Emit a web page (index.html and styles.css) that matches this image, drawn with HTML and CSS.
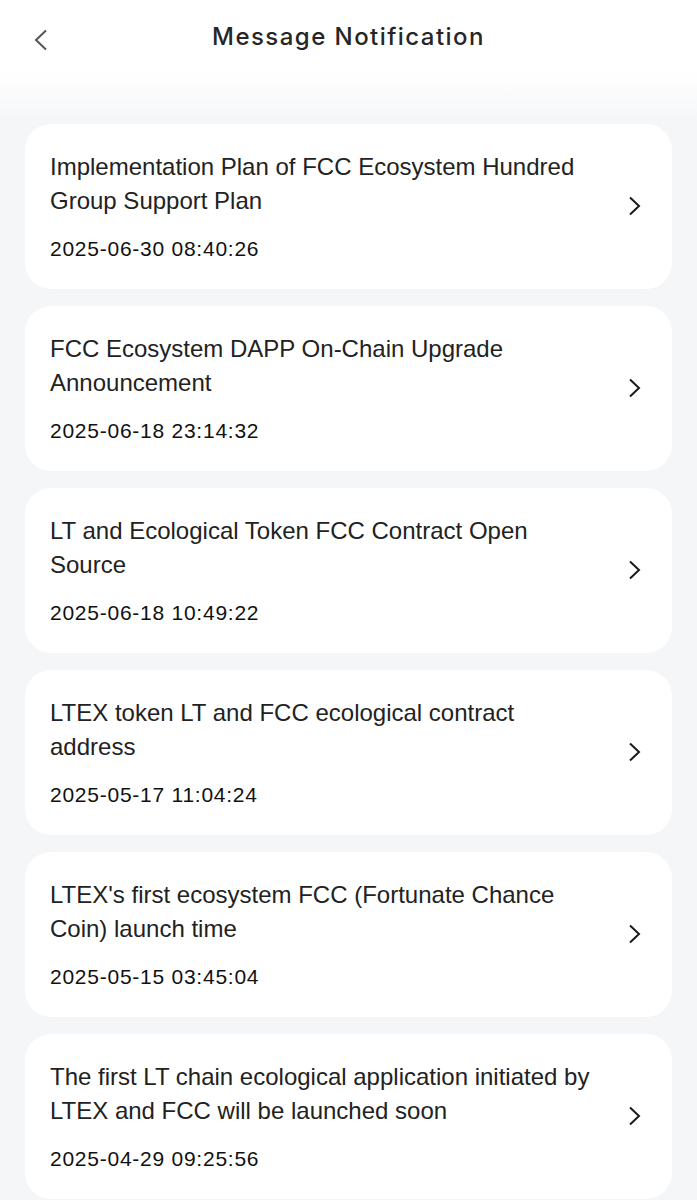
FILE: index.html
```html
<!DOCTYPE html>
<html lang="en">
  <head>
    <meta charset="UTF-8" />
    <meta name="viewport" content="width=device-width, initial-scale=1.0" />
    <title>Message Notification</title>
    <link rel="stylesheet" href="styles.css">
  </head>
  <body>
    <header class="topbar">
      <span class="back">
        <svg width="14" height="22" viewBox="0 0 14 22">
          <path d="M13 1.5 L3 11 L13 20.5" fill="none" stroke="#555" stroke-width="2" />
        </svg>
      </span>
      <h1>Message Notification</h1>
    </header>

    <div class="list">
      <div class="card">
        <div class="card-body">
          <p class="title">Implementation Plan of FCC Ecosystem Hundred Group Support Plan</p>
          <p class="date">2025-06-30 08:40:26</p>
        </div>
        <svg class="arrow" width="13" height="20" viewBox="0 0 13 20">
          <path d="M2 1.5 L11 10 L2 18.5" fill="none" stroke="#1a1a1a" stroke-width="2" />
        </svg>
      </div>

      <div class="card">
        <div class="card-body">
          <p class="title">FCC Ecosystem DAPP On-Chain Upgrade Announcement</p>
          <p class="date">2025-06-18 23:14:32</p>
        </div>
        <svg class="arrow" width="13" height="20" viewBox="0 0 13 20">
          <path d="M2 1.5 L11 10 L2 18.5" fill="none" stroke="#1a1a1a" stroke-width="2" />
        </svg>
      </div>

      <div class="card">
        <div class="card-body">
          <p class="title">LT and Ecological Token FCC Contract Open Source</p>
          <p class="date">2025-06-18 10:49:22</p>
        </div>
        <svg class="arrow" width="13" height="20" viewBox="0 0 13 20">
          <path d="M2 1.5 L11 10 L2 18.5" fill="none" stroke="#1a1a1a" stroke-width="2" />
        </svg>
      </div>

      <div class="card">
        <div class="card-body">
          <p class="title">LTEX token LT and FCC ecological contract address</p>
          <p class="date">2025-05-17 11:04:24</p>
        </div>
        <svg class="arrow" width="13" height="20" viewBox="0 0 13 20">
          <path d="M2 1.5 L11 10 L2 18.5" fill="none" stroke="#1a1a1a" stroke-width="2" />
        </svg>
      </div>

      <div class="card">
        <div class="card-body">
          <p class="title">LTEX's first ecosystem FCC (Fortunate Chance Coin) launch time</p>
          <p class="date">2025-05-15 03:45:04</p>
        </div>
        <svg class="arrow" width="13" height="20" viewBox="0 0 13 20">
          <path d="M2 1.5 L11 10 L2 18.5" fill="none" stroke="#1a1a1a" stroke-width="2" />
        </svg>
      </div>

      <div class="card">
        <div class="card-body">
          <p class="title">The first LT chain ecological application initiated by LTEX and FCC will be launched soon</p>
          <p class="date">2025-04-29 09:25:56</p>
        </div>
        <svg class="arrow" width="13" height="20" viewBox="0 0 13 20">
          <path d="M2 1.5 L11 10 L2 18.5" fill="none" stroke="#1a1a1a" stroke-width="2" />
        </svg>
      </div>
    </div>
  </body>
</html>
```

FILE: styles.css
```css
body {
  font-family: "Liberation Sans", Arial, sans-serif;
  background: linear-gradient(to bottom, #ffffff 0px, #ffffff 70px, #f5f6f8 125px, #f5f6f8 100%);
  margin: 0;
  padding: 0;
  color: #222;
  min-height: 1200px;
}

.topbar {
  position: relative;
  height: 72px;
  display: flex;
  align-items: center;
  justify-content: center;
}

.topbar h1 {
  margin: 0;
  font-family: Inter, "Liberation Sans", sans-serif;
  font-size: 24px;
  font-weight: 500;
  color: #262626;
  letter-spacing: 1.45px;
}

.back {
  position: absolute;
  left: 33px;
  top: 29px;
}

.list {
  display: flex;
  flex-direction: column;
  gap: 17px;
  padding: 52px 25px 0;
}

.card {
  background-color: #ffffff;
  border-radius: 26px;
  padding: 26px 31px 28px 25px;
  display: flex;
  align-items: center;
  gap: 28px;
}

.card-body {
  flex: 1;
}

.title {
  margin: 0;
  font-size: 24px;
  line-height: 34px;
  color: #222;
}

.date {
  margin: 19px 0 0;
  font-size: 21px;
  line-height: 24px;
  letter-spacing: 0.75px;
  color: #111;
}

.arrow {
  flex-shrink: 0;
}
```
